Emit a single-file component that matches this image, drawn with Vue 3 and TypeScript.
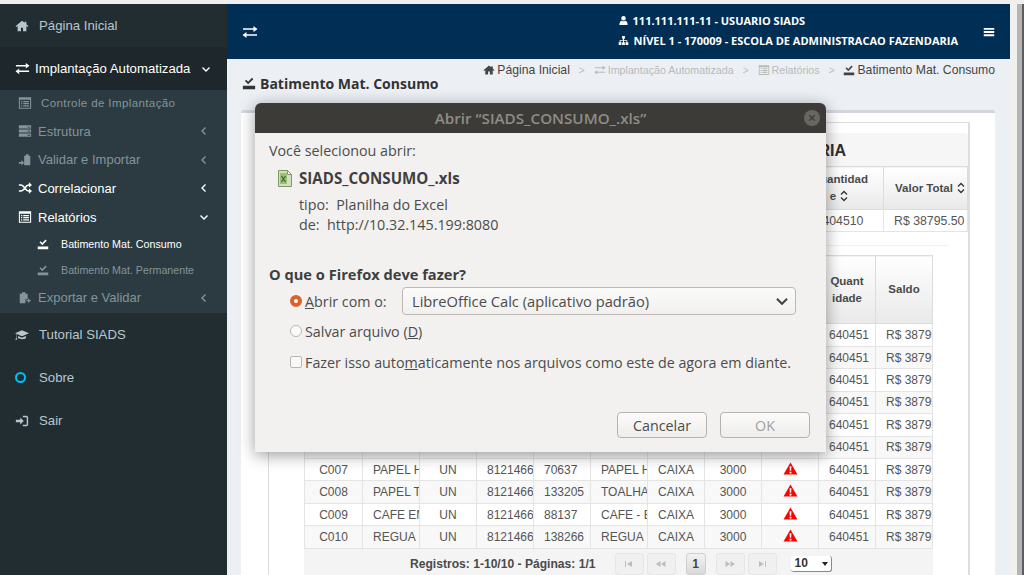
<script setup lang="ts">
interface MenuRow {
  label: string
  icon: string
  chevron?: 'left' | 'down'
  active?: boolean
}

interface StockRow {
  code: string
  desc: string
  account: string
  item: string
  name: string
}

const icons: Record<string, { fill?: string; line?: string }> = {
  home: { fill: 'M8 2 .6 8.2l.9 1L3 8v6h3.8v-4h2.4v4H13V8l1.5 1.2.9-1L13 6.1V3h-2v1.4z' },
  transfer: {
    fill: 'M1 4.200h10.500V2L15.500 5l-4 3V5.800H1zM15 10.200H4.500V8l-4 3 4 3v-2.200H15z',
  },
  list: {
    fill: 'M1 1.500h14v13H1zM2.200 4.400v9h11.600v-9zM3.500 5.600h1.400V7H3.500zM6 5.600h6.500V7H6zM3.500 8.100h1.400v1.400H3.500zM6 8.100h6.500v1.400H6zM3.500 10.600h1.400V12H3.500zM6 10.600h6.500V12H6z',
  },
  server: {
    fill: 'M1 1.500h14v3.600H1zM1 6.200h14v3.600H1zM1 10.900h14v3.600H1zM11 3h3v1h-3zM11 7.600h3v1h-3zM11 12.300h3v1h-3z',
  },
  paste: {
    fill: 'M7 3h2V1.500h3V3h2v11H7zM1 10.200h3V8l3 3.200-3 3.200v-2.200H1z',
  },
  random: {
    line: 'M1 4.500h2.500c3.500 0 5 7 8.500 7H13M1 11.500h2.500c3.500 0 5-7 8.500-7H13',
    fill: 'M12.500 1.500 16 4.500l-3.500 3zM12.500 8.500l3.500 3-3.500 3z',
  },
  saved: {
    fill: 'M1 11.200h14V15H1zM3.300 5.800l1.500-1.500 2.200 2.200 4.400-4.400 1.500 1.500L7 9.500z',
  },
  clipboard: {
    fill: 'M2 3h2.500V1.500h4V3H11v6.500H8.500V14H2zM9.800 10.300h1.700V8.800h1.400v1.500h1.600v1.400h-1.600v1.500h-1.400v-1.500H9.800z',
  },
  cap: {
    fill: 'M0 6 8 2.500 16 6 8 9.500zM3.500 9v2.800c1.800 1.300 7.200 1.300 9 0V9L8 11zM1.300 7v4.200l-.9 2.300h2.200l-.8-2.300V7.500z',
  },
  signin: {
    fill: 'M1 6.500h5V4l4 4-4 4V9.500H1zM9 2h4a2 2 0 0 1 2 2v8a2 2 0 0 1-2 2H9v-1.600h4a.4.4 0 0 0 .4-.4V4a.4.4 0 0 0-.4-.4H9z',
  },
  user: {
    fill: 'M8 1.500a3.300 3.300 0 1 1 0 6.600 3.300 3.300 0 0 1 0-6.600zM2 14.500c0-4 1.500-6 3.500-6.200 1.500 1 3.500 1 5 0 2 .2 3.500 2.200 3.500 6.200z',
  },
  sitemap: {
    fill: 'M6 1.500h4v4H8.700v2h4.800v3H15v4h-4v-4h1.300V8.700H8.700v1.800H10v4H6v-4h1.300V8.700H3.700v1.800H5v4H1v-4h1.300v-3h4.800v-2H6z',
  },
  bars: { fill: 'M1 2.500h14v2.600H1zM1 6.700h14v2.600H1zM1 10.900h14v2.600H1z' },
}

const topItem: MenuRow = { label: 'Página Inicial', icon: 'home' }
const treeHead: MenuRow = { label: 'Implantação Automatizada', icon: 'transfer' }

const treeRows: MenuRow[] = [
  { label: 'Estrutura', icon: 'server', chevron: 'left' },
  { label: 'Validar e Importar', icon: 'paste', chevron: 'left' },
  { label: 'Correlacionar', icon: 'random', chevron: 'left', active: true },
  { label: 'Relatórios', icon: 'list', chevron: 'down', active: true },
]

const blankRow: StockRow = { code: '', desc: '', account: '', item: '', name: '' }

const stockRows: StockRow[] = [
  { ...blankRow, code: 'C001' },
  { ...blankRow, code: 'C002' },
  { ...blankRow, code: 'C003' },
  { ...blankRow, code: 'C004' },
  { ...blankRow, code: 'C005' },
  { ...blankRow, code: 'C006' },
  { code: 'C007', desc: 'PAPEL HIGIENICO', account: '81214660', item: '70637', name: 'PAPEL HIGIENICO' },
  { code: 'C008', desc: 'PAPEL TOALHA', account: '81214660', item: '133205', name: 'TOALHA DE PAPEL' },
  { code: 'C009', desc: 'CAFE EM PO', account: '81214660', item: '88137', name: 'CAFE - EM PO' },
  { code: 'C010', desc: 'REGUA', account: '81214660', item: '138266', name: 'REGUA' },
]
</script>

<template>
  <div class="screen">
    <aside class="sidebar">
      <a class="top-item">
        <svg class="ico" viewBox="0 0 16 16"><path :d="icons.home.fill" /></svg>
        <span>{{ topItem.label }}</span>
      </a>
      <a class="tree-head">
        <svg class="ico" viewBox="0 0 16 16"><path :d="icons.transfer.fill" /></svg>
        <span>{{ treeHead.label }}</span>
        <svg class="chev" viewBox="0 0 10 10"><path d="M1.500 3.500 5 7l3.500-3.500" /></svg>
      </a>
      <div class="tree">
        <a class="tree-row first">
          <svg class="ico" viewBox="0 0 16 16"><path :d="icons.list.fill" fill-rule="evenodd" /></svg>
          <span>Controle de Implantação</span>
        </a>
        <a v-for="row in treeRows" :key="row.label" class="tree-row" :class="{ active: row.active }">
          <svg class="ico" viewBox="0 0 16 16">
            <path v-if="icons[row.icon].line" :d="icons[row.icon].line" class="stroke" />
            <path :d="icons[row.icon].fill" fill-rule="evenodd" />
          </svg>
          <span>{{ row.label }}</span>
          <svg class="chev" viewBox="0 0 10 10">
            <path :d="row.chevron === 'down' ? 'M1.500 3.500 5 7l3.500-3.500' : 'M6.500 1.500 3 5l3.500 3.500'" />
          </svg>
        </a>
        <a class="leaf active">
          <svg class="ico" viewBox="0 0 16 16"><path :d="icons.saved.fill" /></svg>
          <span>Batimento Mat. Consumo</span>
        </a>
        <a class="leaf">
          <svg class="ico" viewBox="0 0 16 16"><path :d="icons.saved.fill" /></svg>
          <span>Batimento Mat. Permanente</span>
        </a>
        <a class="tree-row">
          <svg class="ico" viewBox="0 0 16 16"><path :d="icons.clipboard.fill" /></svg>
          <span>Exportar e Validar</span>
          <svg class="chev" viewBox="0 0 10 10"><path d="M6.500 1.500 3 5l3.500 3.500" /></svg>
        </a>
      </div>
      <a class="top-item">
        <svg class="ico" viewBox="0 0 16 16"><path :d="icons.cap.fill" /></svg>
        <span>Tutorial SIADS</span>
      </a>
      <a class="top-item">
        <span class="ring"></span>
        <span>Sobre</span>
      </a>
      <a class="top-item">
        <svg class="ico" viewBox="0 0 16 16"><path :d="icons.signin.fill" /></svg>
        <span>Sair</span>
      </a>
    </aside>

    <main class="main">
      <header class="topbar">
        <svg class="ico swap" viewBox="0 0 16 16"><path :d="icons.transfer.fill" /></svg>
        <div class="identity">
          <div>
            <svg class="ico" viewBox="0 0 16 16"><path :d="icons.user.fill" /></svg>
            111.111.111-11 - USUARIO SIADS
          </div>
          <div>
            <svg class="ico" viewBox="0 0 16 16"><path :d="icons.sitemap.fill" /></svg>
            NÍVEL 1 - 170009 - ESCOLA DE ADMINISTRACAO FAZENDARIA
          </div>
        </div>
        <svg class="ico bars" viewBox="0 0 16 16"><path :d="icons.bars.fill" /></svg>
      </header>

      <div class="page-head">
        <h1>
          <svg class="ico" viewBox="0 0 16 16"><path :d="icons.saved.fill" /></svg>
          Batimento Mat. Consumo
        </h1>
        <nav class="crumbs">
          <span class="crumb">
            <svg class="ico" viewBox="0 0 16 16"><path :d="icons.home.fill" /></svg>
            Página Inicial
          </span>
          <i>&gt;</i>
          <span class="crumb off">
            <svg class="ico" viewBox="0 0 16 16"><path :d="icons.transfer.fill" /></svg>
            Implantação Automatizada
          </span>
          <i>&gt;</i>
          <span class="crumb off">
            <svg class="ico" viewBox="0 0 16 16"><path :d="icons.list.fill" fill-rule="evenodd" /></svg>
            Relatórios
          </span>
          <i>&gt;</i>
          <span class="crumb">
            <svg class="ico" viewBox="0 0 16 16"><path :d="icons.saved.fill" /></svg>
            Batimento Mat. Consumo
          </span>
        </nav>
      </div>

      <section class="box">
        <div class="panel">
          <div class="panel-title">AUDITORIA</div>
          <table class="totals">
            <colgroup>
              <col style="width: 526px" />
              <col style="width: 88px" />
              <col style="width: 84px" />
            </colgroup>
            <thead>
              <tr>
                <th></th>
                <th>
                  Quantidad<br />e
                  <svg class="sort" viewBox="0 0 10 14"><path d="M2 5.500 5 2.500l3 3M2 8.500l3 3 3-3" /></svg>
                </th>
                <th class="nowrap">
                  Valor Total
                  <svg class="sort" viewBox="0 0 10 14"><path d="M2 5.500 5 2.500l3 3M2 8.500l3 3 3-3" /></svg>
                </th>
              </tr>
            </thead>
            <tbody>
              <tr>
                <td></td>
                <td class="mid">6404510</td>
                <td>R$ 38795.50</td>
              </tr>
            </tbody>
          </table>
          <div class="rule"></div>
          <div class="grid-wrap">
            <table class="stock">
              <thead>
                <tr>
                  <th v-for="n in 9" :key="n"></th>
                  <th>Quant<br />idade</th>
                  <th>Saldo</th>
                </tr>
              </thead>
              <tbody>
                <tr v-for="row in stockRows" :key="row.code">
                  <td class="mid">{{ row.code }}</td>
                  <td>{{ row.desc }}</td>
                  <td class="mid">UN</td>
                  <td>{{ row.account }}</td>
                  <td>{{ row.item }}</td>
                  <td>{{ row.name }}</td>
                  <td class="mid">CAIXA</td>
                  <td class="mid">3000</td>
                  <td class="mid">
                    <svg class="warn" viewBox="0 0 16 14">
                      <path d="M8 .5 15.500 13.500H.5z" fill="#f00" />
                      <path d="M7 4.500h2l-.3 5H7.300zM7 10.500h2v2H7z" fill="#fff" />
                    </svg>
                  </td>
                  <td class="mid">640451</td>
                  <td>R$ 38795.50</td>
                </tr>
              </tbody>
            </table>
            <div class="pager">
              <span class="records">Registros: 1-10/10 - Páginas: 1/1</span>
              <span class="page-btn"><svg viewBox="0 0 12 8"><path d="M2 1h1v6H2zM9 1v6L4 4z" /></svg></span>
              <span class="page-btn"><svg viewBox="0 0 12 8"><path d="M5.500 1v6L1 4zM10.500 1v6L6 4z" /></svg></span>
              <span class="page-current">1</span>
              <span class="page-btn"><svg viewBox="0 0 12 8"><path d="M1.500 1v6L6 4zM6.500 1v6L11 4z" /></svg></span>
              <span class="page-btn"><svg viewBox="0 0 12 8"><path d="M3 1v6l5-3zM9 1h1v6H9z" /></svg></span>
              <span class="size-select">10<b></b></span>
            </div>
          </div>
        </div>
      </section>
    </main>

    <div class="scroller"><span></span><span></span><span></span></div>

    <div class="dialog">
      <div class="dialog-title">
        <span>Abrir “SIADS_CONSUMO_.xls”</span>
        <em class="close">×</em>
      </div>
      <div class="dialog-body">
        <p class="picked">Você selecionou abrir:</p>
        <div class="file">
          <svg class="xls" viewBox="0 0 14 17">
            <path d="M.5.5h9l4 4v12H.5z" fill="#cfe0bb" stroke="#7f9a68" />
            <path d="M9.500.5v4h4z" fill="#fff" stroke="#7f9a68" />
            <path d="M2 3h7v11H2z" fill="#9dbd7c" />
            <path d="M3.500 6l4 6M7.500 6l-4 6" stroke="#3f6b2c" stroke-width="1.300" />
          </svg>
          <strong>SIADS_CONSUMO_.xls</strong>
        </div>
        <p class="meta">tipo:&nbsp; Planilha do Excel</p>
        <p class="meta">de:&nbsp; http://10.32.145.199:8080</p>
        <p class="question">O que o Firefox deve fazer?</p>
        <div class="option open-row">
          <span class="radio on"></span>
          <span class="open-label"><u>A</u>brir com o:</span>
          <div class="app-select">
            <span>LibreOffice Calc (aplicativo padrão)</span>
            <svg viewBox="0 0 12 8"><path d="M1.500 1.500 6 6l4.500-4.500" /></svg>
          </div>
        </div>
        <div class="option save-row">
          <span class="radio"></span>
          <span>Salvar arquivo (<u>D</u>)</span>
        </div>
        <div class="option auto-row">
          <span class="check"></span>
          <span>Fazer isso auto<u>m</u>aticamente nos arquivos como este de agora em diante.</span>
        </div>
        <div class="actions">
          <button type="button">Cancelar</button>
          <button type="button" class="off">OK</button>
        </div>
      </div>
    </div>
  </div>
</template>

<style>
html,
body {
  margin: 0;
  overflow: hidden;
}
</style>

<style scoped>
.screen {
  position: relative;
  display: flex;
  width: 1024px;
  height: 575px;
  box-sizing: border-box;
  padding-top: 4px;
  overflow: hidden;
  background: #f0efed;
  font-family: "Liberation Sans", Arial, sans-serif;
}

.ico {
  width: 14px;
  height: 14px;
  flex: none;
  fill: currentColor;
}

.stroke {
  fill: none;
  stroke: currentColor;
  stroke-width: 1.800;
}

/* sidebar */
.sidebar {
  width: 227px;
  flex: none;
  background: #222d32;
  color: #b8c7ce;
  font-size: 13.200px;
}

.top-item {
  display: flex;
  align-items: center;
  gap: 10px;
  height: 43px;
  padding-left: 15px;
}

.ring {
  width: 7px;
  height: 7px;
  margin: 0 3px 0 0;
  border: 2px solid #00c0ef;
  border-radius: 50%;
}

.tree-head {
  display: flex;
  align-items: center;
  gap: 5px;
  height: 43px;
  padding-left: 15px;
  background: #1e282c;
  color: #fff;
}

.tree-head .ico {
  width: 15px;
  height: 15px;
}

.chev {
  width: 10px;
  height: 10px;
  margin-left: auto;
  margin-right: 16px;
  fill: none;
  stroke: currentColor;
  stroke-width: 1.400;
}

.tree {
  height: 223px;
  background: #2c3b41;
  color: #83949b;
}

.tree-row {
  display: flex;
  align-items: center;
  gap: 6px;
  height: 28.600px;
  padding-left: 18px;
  font-size: 13px;
}

.tree-row.first {
  height: 25px;
  padding-bottom: 2px;
  gap: 9px;
  font-size: 11.600px;
  letter-spacing: 0.350px;
}

.tree-row.active {
  color: #fff;
}

.tree-row .chev {
  margin-right: 18px;
}

.leaf {
  display: flex;
  align-items: center;
  gap: 12px;
  height: 26px;
  padding-left: 37px;
  font-size: 10.700px;
  color: #83949b;
}

.leaf.active {
  color: #fff;
}

.leaf .ico {
  width: 12px;
  height: 12px;
}

/* main column */
.main {
  display: flex;
  flex-direction: column;
  width: 783px;
  flex: none;
  background: #ecf0f5;
}

.topbar {
  display: flex;
  align-items: center;
  height: 55px;
  flex: none;
  padding: 0 15px;
  background: #002e54;
  color: #fff;
}

.swap {
  width: 16px;
  height: 16px;
}

.identity {
  display: flex;
  flex-direction: column;
  gap: 6px;
  margin-top: -2px;
  margin-left: auto;
  margin-right: 25px;
  font-family: "Open Sans", sans-serif;
  font-size: 11px;
  font-weight: 700;
  line-height: 14px;
}

.identity div {
  display: flex;
  align-items: center;
  gap: 4px;
}

.identity .ico {
  width: 11px;
  height: 11px;
}

.identity div + div {
  gap: 5px;
}

.bars {
  width: 12px;
  height: 12px;
}

.page-head {
  position: relative;
  display: flex;
  justify-content: space-between;
  height: 51px;
  flex: none;
  padding: 0 15px;
}

h1 {
  display: flex;
  align-items: center;
  gap: 4px;
  margin: 15px 0 0;
  height: 18px;
  font-family: "Open Sans", sans-serif;
  font-size: 14px;
  font-weight: 700;
  color: #333;
}

.crumbs {
  display: flex;
  align-items: center;
  height: 14px;
  margin-top: 4px;
  font-size: 12.200px;
  color: #444;
  white-space: nowrap;
}

.crumbs i {
  margin: 0 9px;
  font-style: normal;
  font-size: 10px;
  color: #bbb;
}

.crumb {
  display: flex;
  align-items: center;
  gap: 2px;
}

.crumb .ico {
  width: 12px;
  height: 12px;
}

.crumb.off {
  color: #b9b9b9;
  font-size: 10.700px;
}

.box {
  flex: 1;
  margin: 0 15px 0 14px;
  min-height: 0;
  border-top: 3px solid #d2d6de;
  border-radius: 3px 3px 0 0;
  padding: 9px 25px 0 27px;
  background: #fff;
}

.panel {
  height: 100%;
  border: 1px solid #ddd;
  border-right-width: 2px;
  border-bottom: 0;
  padding-top: 10px;
  box-sizing: border-box;
}

.panel-title {
  height: 33px;
  padding-right: 122px;
  background: #f6f6f6;
  border-radius: 4px 4px 0 0;
  text-align: right;
  font-size: 16px;
  font-weight: 700;
  line-height: 35px;
  color: #2f2f2f;
}

table {
  border-collapse: collapse;
  table-layout: fixed;
  font-size: 12px;
  color: #555;
}

th {
  padding: 0;
  border: 1px solid #dcdcdc;
  background: linear-gradient(#fff, #e9e9e9);
  font-size: 11.500px;
  font-weight: 700;
  line-height: 17px;
  color: #4a4a4a;
}

td {
  border: 1px solid #e4e4e4;
  overflow: hidden;
  white-space: nowrap;
  padding: 0 10px;
  height: 21.430px;
}

.mid {
  text-align: center;
}

.nowrap {
  white-space: nowrap;
  overflow: hidden;
  text-align: left;
  padding-left: 11px;
}

.sort {
  width: 10px;
  height: 14px;
  vertical-align: -3px;
  fill: none;
  stroke: #333;
  stroke-width: 1.300;
}

.totals {
  width: 698px;
}

.totals td {
  font-size: 12.300px;
}

.totals th {
  height: 42px;
}

.rule {
  height: 1px;
  margin: 13px 20px 0 0;
  background: #f1f1f1;
}

.grid-wrap {
  width: 629px;
  margin: 9px auto 0;
}

.stock {
  width: 629px;
}

.stock th {
  height: 67px;
}

.stock th:first-child,
.stock td:first-child {
  width: 57px;
}

.stock tbody tr:nth-child(even) td {
  background: #f8f8f8;
}

.warn {
  display: block;
  width: 15px;
  height: 13px;
  margin: -3px auto 0;
}

.pager {
  display: flex;
  align-items: center;
  height: 28px;
  padding-top: 1px;
  background: #f4f4f4;
}

.records {
  margin-left: 106px;
  margin-right: 19px;
  font-size: 12.100px;
  font-weight: 700;
  color: #4a4a4a;
}

.page-btn {
  display: flex;
  align-items: center;
  justify-content: center;
  width: 29px;
  height: 22px;
  margin-right: 3px;
  box-sizing: border-box;
  border: 1px solid #e6e6e6;
  border-radius: 3px;
  background: #f0f0f0;
}

.page-btn svg {
  width: 12px;
  height: 8px;
  fill: #bdbdbd;
}

.page-current {
  width: 20px;
  height: 22px;
  margin: 0 10px 0 7px;
  box-sizing: border-box;
  border: 1px solid #cfcfcf;
  border-radius: 3px;
  background: linear-gradient(#f2f2f2, #d9d9d9);
  text-align: center;
  font-size: 12px;
  font-weight: 700;
  line-height: 21px;
  color: #444;
}

.size-select {
  position: relative;
  width: 41px;
  height: 16px;
  margin-left: 11px;
  box-sizing: border-box;
  padding-left: 4px;
  border-radius: 3px;
  border-right: 1px solid #888;
  border-bottom: 1px solid #888;
  background: #fff;
  font-size: 12px;
  font-weight: 700;
  line-height: 15px;
  color: #333;
}

.size-select b {
  position: absolute;
  right: 3px;
  top: 6px;
  border: 3px solid transparent;
  border-top: 4px solid #222;
  border-bottom: 0;
}

.scroller {
  display: flex;
  flex: 1;
}

.scroller span:nth-child(1) {
  width: 7px;
  background: #f0f0ef;
}

.scroller span:nth-child(2) {
  width: 5px;
  background: #b5b5b4;
}

.scroller span:nth-child(3) {
  width: 2px;
  background: #5c5c5c;
}

/* download dialog */
.dialog {
  position: absolute;
  left: 255px;
  top: 103px;
  width: 571px;
  height: 349px;
  border-radius: 6px 6px 0 0;
  background: #f2f1f0;
  box-shadow: 0 3px 16px rgba(0, 0, 0, 0.4);
  font-family: "Open Sans", sans-serif;
  font-size: 14.300px;
  color: #4c4c4c;
}

.dialog-title {
  position: relative;
  height: 30px;
  border-radius: 6px 6px 0 0;
  background: #3c3b37;
  text-align: center;
  font-size: 15.200px;
  font-weight: 600;
  line-height: 30px;
  color: #8f8d87;
}

.close {
  position: absolute;
  right: 6px;
  top: 7px;
  width: 16px;
  height: 16px;
  border-radius: 50%;
  background: #67665f;
  font-style: normal;
  font-size: 14px;
  line-height: 15px;
  color: #3c3b37;
}

.dialog-body {
  padding: 8px 16px 0 14px;
}

p {
  margin: 0;
}

.picked {
  height: 20px;
  line-height: 20px;
}

.file {
  display: flex;
  align-items: center;
  gap: 7px;
  height: 20px;
  margin: 7px 0 0 9px;
  font-size: 15.100px;
  color: #3f3f3f;
}

.xls {
  width: 14px;
  height: 17px;
}

.meta {
  height: 20px;
  margin-left: 30px;
  line-height: 20px;
}

.file + .meta {
  margin-top: 7px;
}

.question {
  height: 20px;
  margin-top: 29px;
  font-size: 14.650px;
  font-weight: 700;
  line-height: 20px;
  color: #3f3f3f;
}

.option {
  display: flex;
  align-items: center;
  height: 20px;
  margin-left: 21px;
  gap: 3px;
}

.open-row {
  height: 28px;
  margin-top: 3px;
}

.open-label {
  width: 94px;
}

.save-row {
  margin-top: 6px;
}

.auto-row {
  margin-top: 11px;
}

.radio {
  width: 12px;
  height: 12px;
  box-sizing: border-box;
  border: 1px solid #b9b7b4;
  border-radius: 50%;
  background: #fbfbfb;
}

.radio.on {
  border: 4px solid #d9622c;
  background: #fff;
}

.check {
  width: 12px;
  height: 12px;
  box-sizing: border-box;
  border: 1px solid #b9b7b4;
  border-radius: 2px;
  background: #f8f8f8;
}

.app-select {
  display: flex;
  align-items: center;
  justify-content: space-between;
  width: 394px;
  height: 28px;
  box-sizing: border-box;
  padding: 0 6px 0 9px;
  border: 1px solid #bdbab6;
  border-radius: 4px;
  background: linear-gradient(#fbfbfa, #f1f0ef);
  font-size: 14.700px;
}

.app-select svg {
  width: 14px;
  height: 9px;
  fill: none;
  stroke: #444;
  stroke-width: 1.800;
}

.actions {
  display: flex;
  justify-content: flex-end;
  gap: 13px;
  margin-top: 40px;
}

button {
  width: 90px;
  height: 26px;
  padding: 0;
  border: 1px solid #b6b3af;
  border-radius: 4px;
  background: linear-gradient(#fbfbfa, #eeedec);
  font: inherit;
  color: #4c4c4c;
}

button.off {
  color: #a0a09c;
}
</style>
